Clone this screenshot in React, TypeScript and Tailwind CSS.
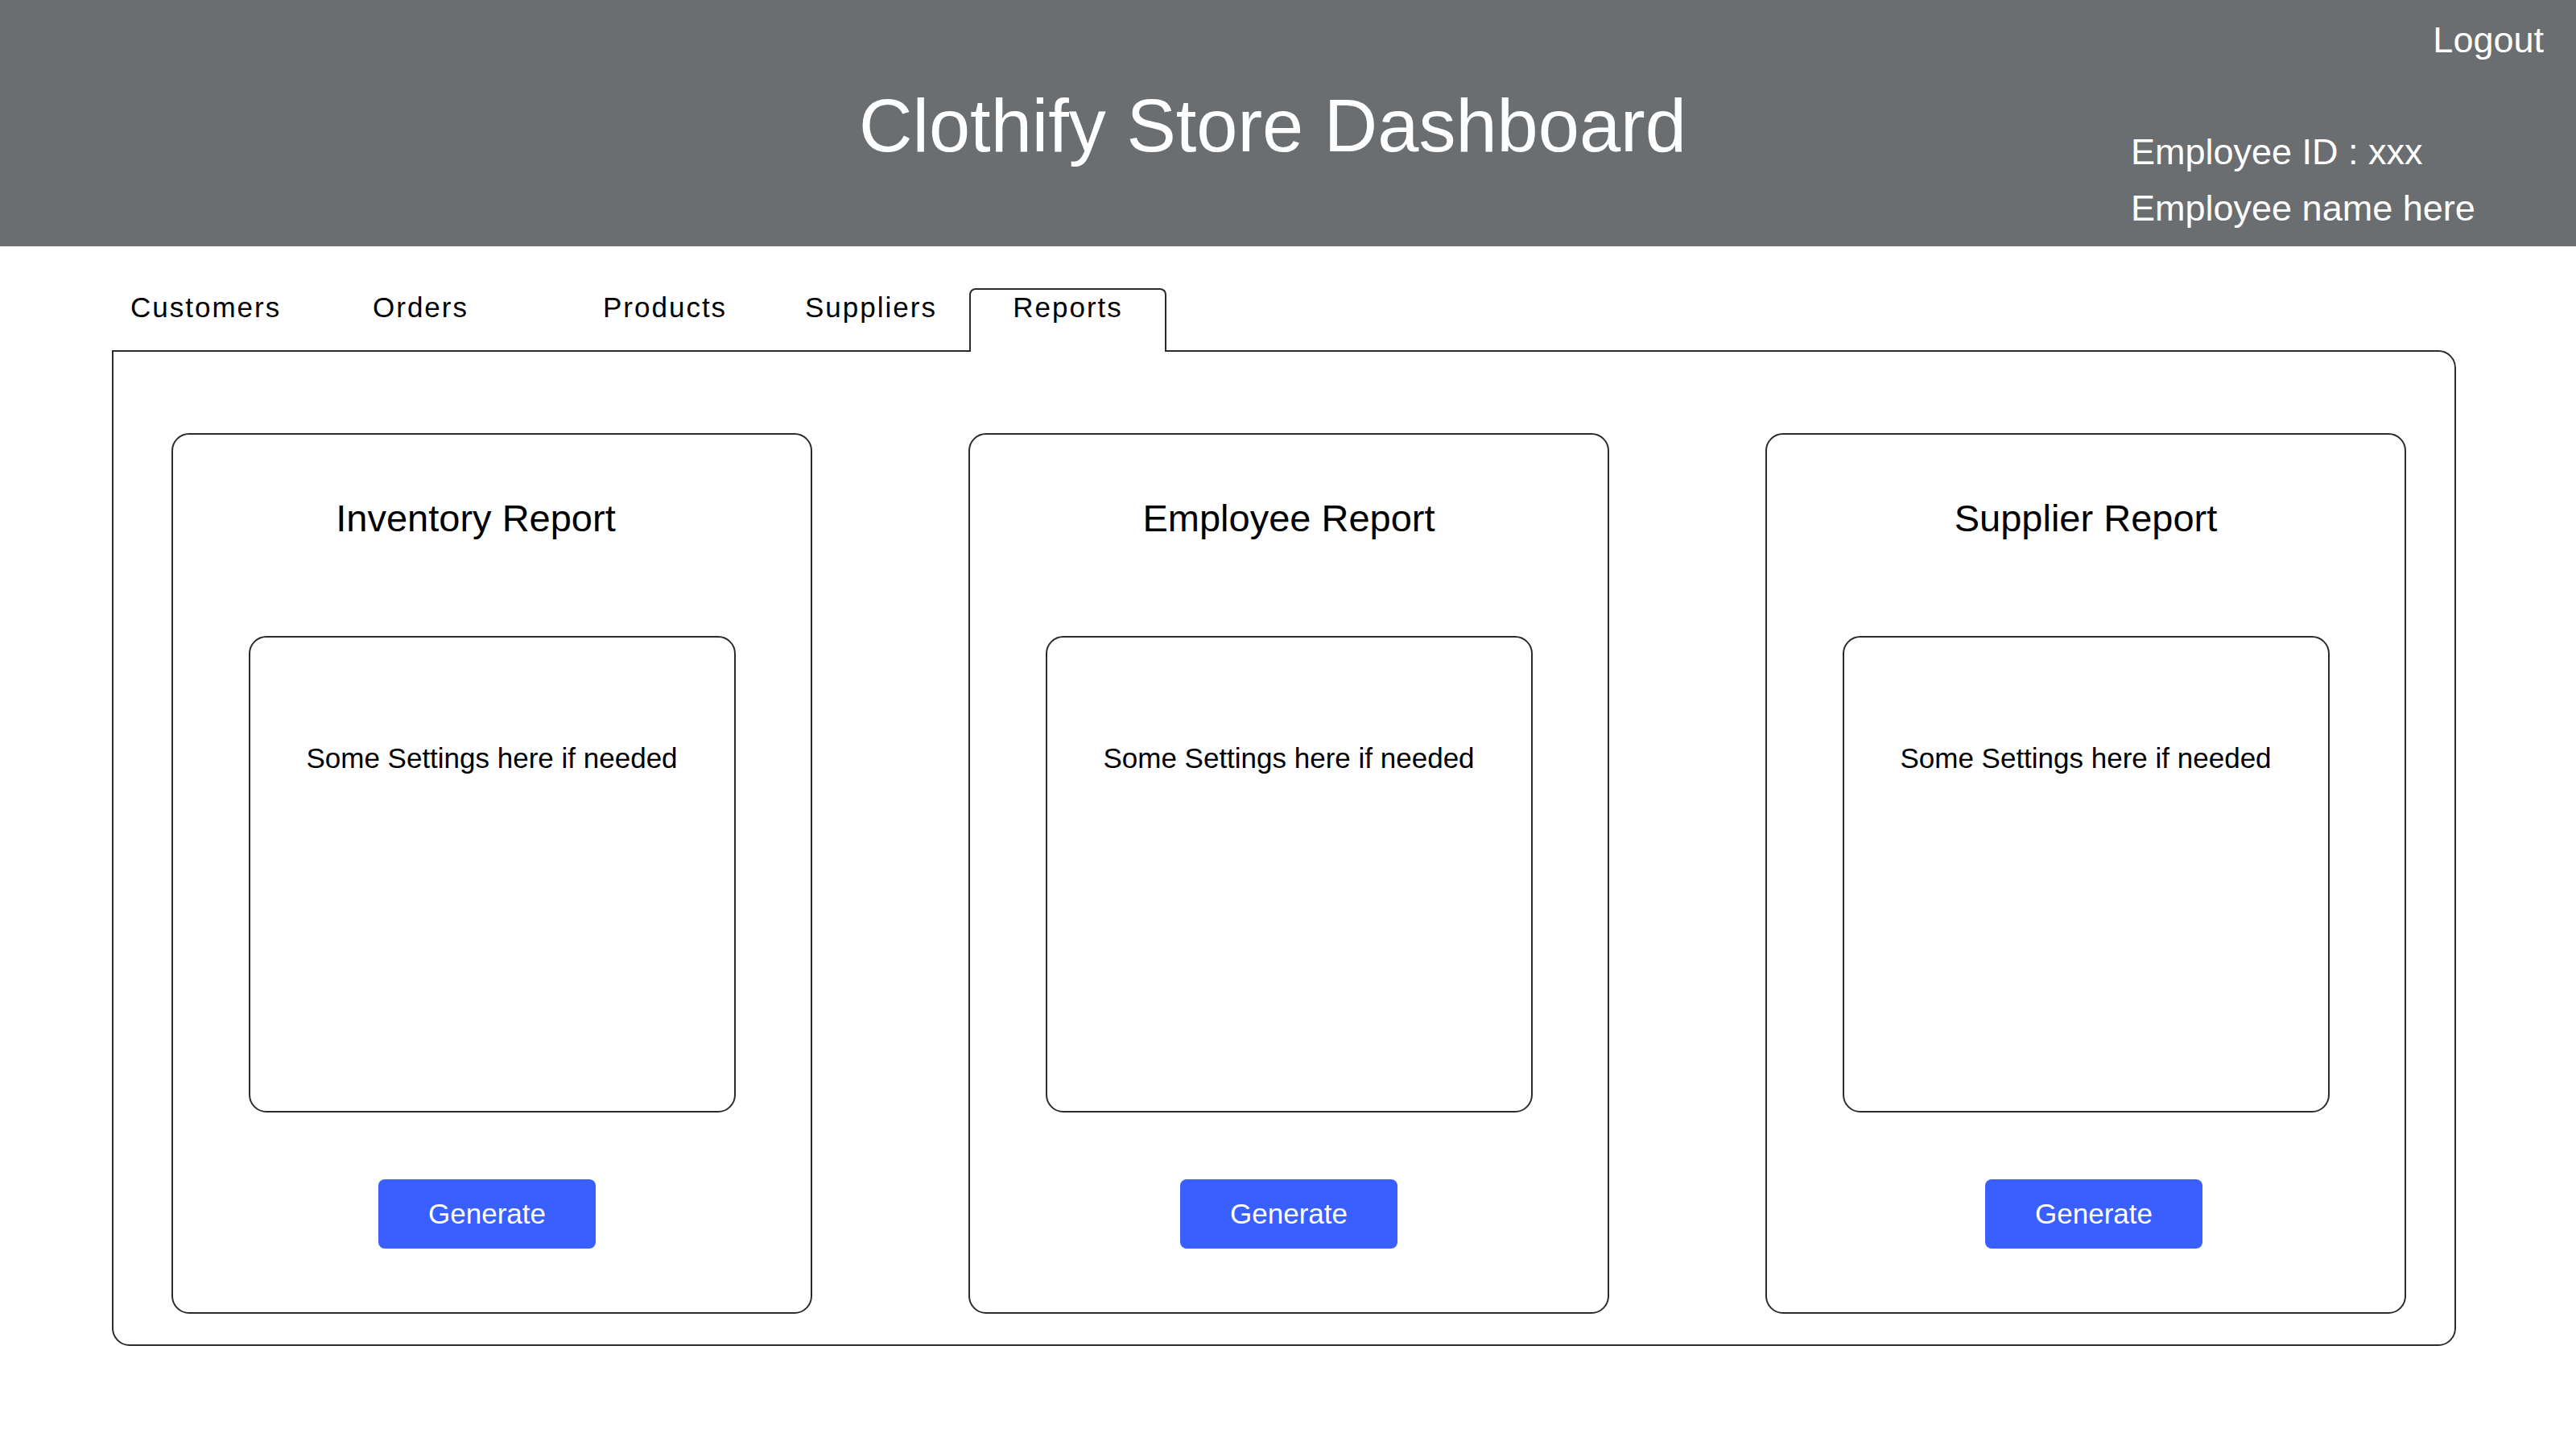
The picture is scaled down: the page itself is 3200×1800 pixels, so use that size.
const TABS = [
  { label: "Customers", width: "w-[301px]" },
  { label: "Orders", width: "w-[286px]" },
  { label: "Products", width: "w-[251px]" },
  { label: "Suppliers", width: "w-[204px]" },
];

// small nudges so each card matches the mockup
const REPORTS = [
  { title: "Inventory Report", titleShift: "mr-[40px]", buttonShift: "mr-[12px]" },
  { title: "Employee Report", titleShift: "", buttonShift: "" },
  { title: "Supplier Report", titleShift: "", buttonShift: "ml-[20px]" },
];

const ReportCard = ({
  title,
  titleShift,
  buttonShift,
}: {
  title: string;
  titleShift: string;
  buttonShift: string;
}) => (
  <div className="flex h-[1094px] w-[796px] flex-col items-center rounded-[22px] border-2 border-[#2b2b2b] pt-[80px]">
    <h3 className={`text-[47px] leading-none text-black ${titleShift}`}>{title}</h3>
    <div className="mt-[123px] h-[592px] w-[605px] rounded-[22px] border-2 border-[#2b2b2b] pt-[132px] text-center">
      <p className="text-[35px] leading-none text-black">Some Settings here if needed</p>
    </div>
    <button
      className={`mt-[83px] h-[86px] w-[270px] rounded-[8px] bg-[#3a5fff] text-[35px] text-white ${buttonShift}`}
    >
      Generate
    </button>
  </div>
);

export default function App() {
  return (
    <div className="h-[1800px] w-full bg-white font-['Liberation_Sans',Arial,sans-serif]">
      <header className="grid h-[306px] grid-cols-[1fr_auto_1fr] bg-[#6b6e71] text-white">
        <div />
        <h1 className="mr-[38px] mt-[110px] self-start text-[92px] leading-none">
          Clothify Store Dashboard
        </h1>
        <div className="flex flex-col items-end pr-[40px] pt-[27px]">
          <span className="text-[45px] leading-none">Logout</span>
          <div className="mt-[82px] w-[513px] text-[45px] leading-[70px]">
            <p>Employee ID : xxx</p>
            <p>Employee name here</p>
          </div>
        </div>
      </header>

      <main className="ml-[139px] mr-[149px] mt-[52px]">
        <nav className="relative z-10 -mb-[2px] flex items-start pl-[23px] text-[35px] leading-[40px] tracking-[2px] text-black">
          {TABS.map((tab) => (
            <div key={tab.label} className={`h-[79px] pt-[4px] ${tab.width}`}>
              {tab.label}
            </div>
          ))}
          <div className="h-[79px] w-[245px] rounded-t-[8px] border-2 border-b-0 border-[#2b2b2b] bg-white pt-[2px] text-center">
            Reports
          </div>
        </nav>

        <section className="flex gap-[194px] rounded-b-[22px] rounded-tr-[22px] border-2 border-[#2b2b2b] pb-[38px] pl-[72px] pr-[60px] pt-[101px]">
          {REPORTS.map((report) => (
            <ReportCard key={report.title} {...report} />
          ))}
        </section>
      </main>
    </div>
  );
}
